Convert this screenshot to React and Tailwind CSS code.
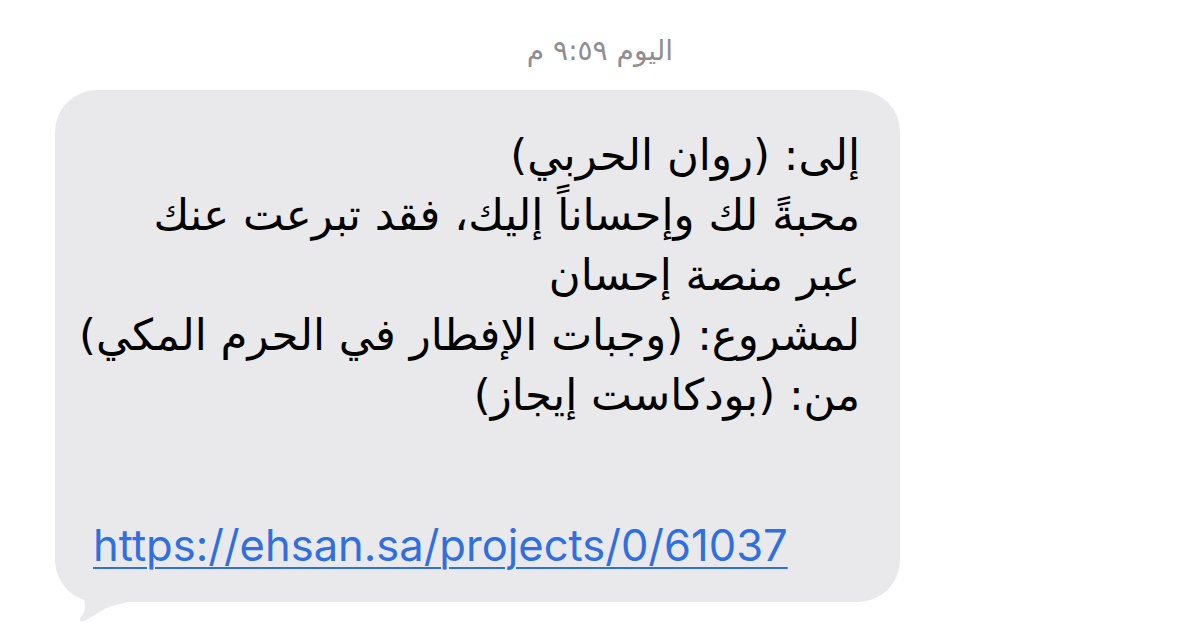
import React from 'react';

const lines = [
  'إلى: (روان الحربي)',
  'محبةً لك وإحساناً إليك، فقد تبرعت عنك',
  'عبر منصة إحسان',
  'لمشروع: (وجبات الإفطار في الحرم المكي)',
  'من: (بودكاست إيجاز)',
];

const BubbleTail = () => (
  <svg className="absolute left-[20px] top-[490px]" width="60" height="45" viewBox="0 0 60 45">
    <path
      d="M4 0 C6 10 10 18 10 26 C10 32 7 36 5 39 C4 41 6 42 9 41 C18 37 26 30 34 27 C40 25 46 24 58 20 L58 0 Z"
      fill="#e9e9eb"
    />
  </svg>
);

export default function App() {
  return (
    <div className="w-[1200px] h-[643px] bg-white overflow-hidden flex flex-col items-center">
      <div
        dir="rtl"
        className="mt-[32px] h-[38px] text-[28px] leading-[38px] text-[#8e8e93]"
        style={{ fontFamily: '"DejaVu Sans", sans-serif' }}
      >
        اليوم ٩:٥٩ م
      </div>
      <div className="self-start ml-[55px] mt-[20px] relative">
        <div className="w-[845px] h-[512px] bg-[#e9e9eb] rounded-[42px] relative pt-[35px] pr-[40px] pl-[38px]">
          <div
            dir="rtl"
            className="text-[43.5px] leading-[60px] text-black"
            style={{ fontFamily: '"DejaVu Sans", sans-serif' }}
          >
            {lines.map((l) => (
              <div key={l} className="whitespace-nowrap">{l}</div>
            ))}
            <div className="h-[60px]" />
          </div>
          <a
            href="#"
            className="block mt-[30px] text-[43.5px] leading-[60px] text-[#2f6fe0] underline underline-offset-[6px] decoration-[2px]"
            style={{ fontFamily: 'Inter, "Liberation Sans", sans-serif' }}
          >
            https://ehsan.sa/projects/0/61037
          </a>
          <BubbleTail />
        </div>
      </div>
    </div>
  );
}
